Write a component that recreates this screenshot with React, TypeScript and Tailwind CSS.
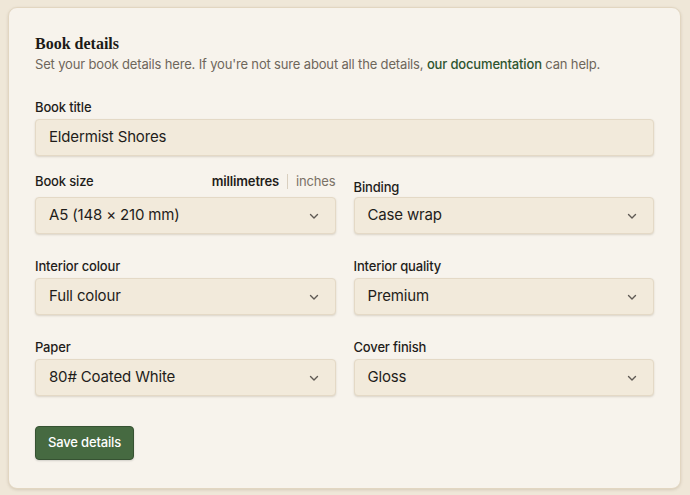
import { useState } from "react";

const Chevron = () => (
  <svg width="12" height="12" viewBox="0 0 12 12" fill="none" className="text-[#5f5a54]">
    <path d="M2.5 4.5 6 8l3.5-3.5" stroke="currentColor" strokeWidth="1.4" strokeLinecap="round" strokeLinejoin="round" />
  </svg>
);

const Select = ({ value }: { value: string }) => (
  <div className="h-[37px] w-full rounded-[4px] border border-[#e4d9c6] bg-[#f2eadb] shadow-[0_1px_2px_rgba(90,70,40,0.18)] flex items-center justify-between pl-[13px] pr-[15px] text-[15px] text-[#1f1d1a]">
    <span>{value}</span>
    <Chevron />
  </div>
);

const Label = ({ children }: { children: React.ReactNode }) => (
  <div className="text-[13px] leading-[18px] font-medium text-[#1f1d1a] mb-[3px]">{children}</div>
);

export default function App() {
  const [unit, setUnit] = useState("mm");

  return (
    <div className="min-h-[495px] w-full bg-[#efe7d8] pt-[7px] pl-2 pr-[9px] pb-[8px] tracking-[-0.01em]" style={{ fontFamily: "Inter, 'Noto Sans', sans-serif" }}>
      <div className="rounded-[9px] border border-[#e2d6c1] bg-[#f7f3ec] shadow-[0_1px_3px_rgba(100,80,50,0.18)] px-[26px] pt-[26px] pb-[28px]">
        <h2 className="text-[16px] leading-[20px] font-bold text-[#1c1a17] tracking-normal" style={{ fontFamily: "'Liberation Serif', serif" }}>
          Book details
        </h2>
        <p className="text-[13px] leading-[18px] text-[#6e665b] mt-[1px]">
          Set your book details here. If you're not sure about all the details,{" "}
          <a className="font-medium text-[#2e5530]">our documentation</a> can help.
        </p>

        <div className="mt-[25px]">
          <Label>Book title</Label>
          <div className="h-[37px] w-full rounded-[4px] border border-[#e4d9c6] bg-[#f2eadb] shadow-[0_1px_2px_rgba(90,70,40,0.18)] flex items-center pl-[13px] text-[15px] text-[#1f1d1a]">
            Eldermist Shores
          </div>
        </div>

        <div className="mt-[16px] grid grid-cols-2 gap-x-[18px] gap-y-[23px] items-end">
          <div>
            <div className="flex items-center justify-between mb-[7px] text-[13px] leading-[18px]">
              <span className="font-medium text-[#1f1d1a]">Book size</span>
              <div className="flex items-center">
                <button onClick={() => setUnit("mm")} className={unit === "mm" ? "font-semibold text-[#1f1d1a]" : "text-[#7a7166]"}>
                  millimetres
                </button>
                <span className="mx-[8px] h-[15px] w-px bg-[#d9cfbf]" />
                <button onClick={() => setUnit("in")} className={unit === "in" ? "font-semibold text-[#1f1d1a]" : "text-[#7a7166]"}>
                  inches
                </button>
              </div>
            </div>
            <Select value="A5 (148 × 210 mm)" />
          </div>
          <div>
            <div className="text-[13px] leading-[18px] font-medium text-[#1f1d1a] mb-[1px]">Binding</div>
            <Select value="Case wrap" />
          </div>
          <div>
            <Label>Interior colour</Label>
            <Select value="Full colour" />
          </div>
          <div>
            <Label>Interior quality</Label>
            <Select value="Premium" />
          </div>
          <div>
            <Label>Paper</Label>
            <Select value="80# Coated White" />
          </div>
          <div>
            <Label>Cover finish</Label>
            <Select value="Gloss" />
          </div>
        </div>

        <button className="mt-[30px] h-[34px] w-[99px] rounded-[4px] border border-[#365232] bg-[#466a41] text-[13px] font-medium text-white shadow-[0_1px_2px_rgba(0,0,0,0.15)]">
          Save details
        </button>
      </div>
    </div>
  );
}
